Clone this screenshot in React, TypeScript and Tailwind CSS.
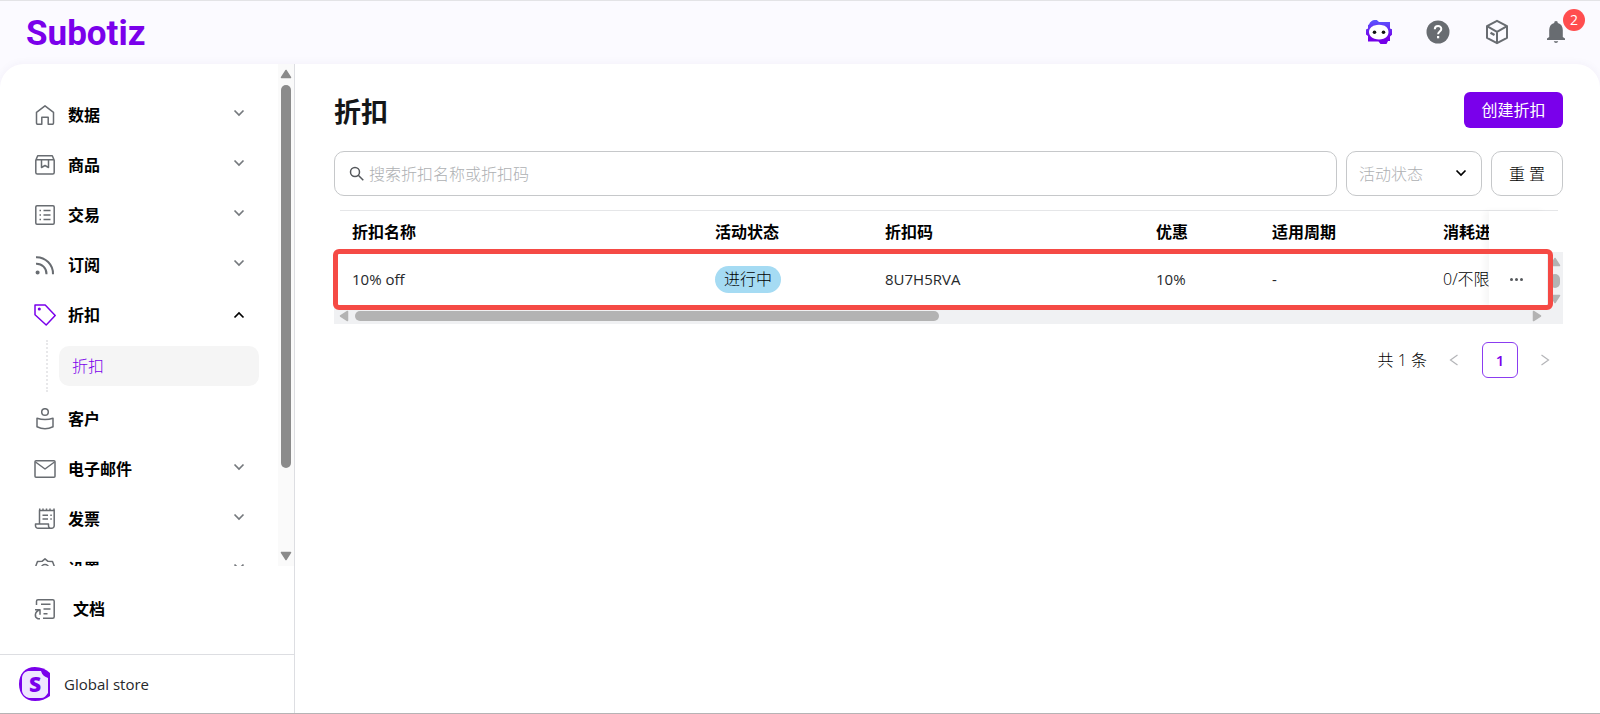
import React from "react";

type IconName =
  | "home" | "box" | "list" | "rss" | "tag" | "user" | "mail" | "invoice" | "gear" | "doc";

const shapes: Record<IconName, React.ReactNode> = {
  home: (
    <path d="M2.500 8.300 11 1.800l8.500 6.500V19a1.200 1.200 0 0 1-1.200 1.200h-4.100v-7H7.800v7H3.700A1.200 1.200 0 0 1 2.500 19Z" />
  ),
  box: (
    <>
      <path d="M1.800 6.200v12.300A1.500 1.500 0 0 0 3.300 20h15.400a1.500 1.500 0 0 0 1.500-1.500V6.200L18.300 1.800H3.700ZM1.800 5.700h18.400" />
      <path d="M7.500 6v7.500l3.500-2 3.500 2V6" />
    </>
  ),
  list: (
    <>
      <rect x="1.800" y="1.800" width="18.400" height="18.400" rx="1.200" />
      <path d="M9.500 6.500h7M9.500 11h7M9.500 15.500h7M5.500 6.500H7M5.500 11H7M5.500 15.500H7" />
    </>
  ),
  rss: (
    <>
      <path d="M2 3.200A16.500 16.500 0 0 1 19 20.200M2 9.700A10 10 0 0 1 12.500 20.200" strokeWidth="2" />
      <circle cx="3.600" cy="18.500" r="1.300" fill="currentColor" />
    </>
  ),
  tag: (
    <>
      <path d="M1 1h10.200l10 10.500-9 9.500L1 10.800Z" />
      <circle cx="5.300" cy="5" r=".8" fill="currentColor" />
    </>
  ),
  user: (
    <>
      <circle cx="11" cy="4" r="3.300" />
      <path d="M3 10.200c5 1.500 11 1.500 16 0v8.600c-5 2.400-11 2.400-16 0Z" />
    </>
  ),
  mail: (
    <>
      <rect x="1" y="2.800" width="20" height="16.400" rx="1" />
      <path d="m1.500 4 9.500 7 9.500-7" />
    </>
  ),
  invoice: (
    <>
      <path d="M5.500 15.500V2.500h14.700v15.200a2.500 2.500 0 0 1-2.500 2.500H4a2.500 2.500 0 0 1-2.500-2.500v-1.700h13v1.700a2.500 2.500 0 0 0 2.500 2.500" />
      <path d="M5.700.5v2M9 .5v2M12.500.5v2M16 .5v2M20 .5v2M8.500 7.200H14M8.500 11H14M16.300 7.200h1.500M16.300 11h1.500" />
    </>
  ),
  gear: (
    <>
      <path d="m11 .8 3 2.500 4.500.300 1.500 3.900L21 11.300l-1.900 3.700-2.500 3.500-5.600 2-5.600-2L2.900 15 1 11.300l1-3.800 1.500-3.900L8 3.300Z" />
      <circle cx="11" cy="10.500" r="4" />
    </>
  ),
  doc: (
    <>
      <path d="M2.500 7V3.300a1.500 1.500 0 0 1 1.500-1.500h14.700a1.500 1.500 0 0 1 1.500 1.500v15.400a1.500 1.500 0 0 1-1.500 1.500H9" />
      <path d="M7 6.300h9.500M9.500 11h7M9.500 15.700h4M1 11.700h5v5M5.800 12C.5 13.500 0 19 4 20.700h2" />
    </>
  ),
};

function NavIcon({ name, active }: { name: IconName; active?: boolean }) {
  return (
    <svg
      viewBox="0 0 22 22"
      className={active ? "size-[22px] shrink-0 text-[#7a00eb]" : "size-[22px] shrink-0 text-[#686c71]"}
      fill="none"
      stroke="currentColor"
      strokeWidth="1.500"
      strokeLinejoin="round"
      aria-hidden="true"
    >
      {shapes[name]}
    </svg>
  );
}

function Chevron({ up, dark }: { up?: boolean; dark?: boolean }) {
  return (
    <svg
      viewBox="0 0 12 12"
      className={dark || up ? "size-3 shrink-0 text-black" : "size-3 shrink-0 text-[#75797d]"}
      fill="none"
      stroke="currentColor"
      strokeWidth="1.700"
      aria-hidden="true"
    >
      <path d={up ? "m1.500 8.500 4.500-4.500 4.500 4.500" : "m1.500 3.500 4.500 4.500 4.500-4.500"} />
    </svg>
  );
}

function Arrow({ dir, className }: { dir: "up" | "down" | "left" | "right"; className: string }) {
  const d = {
    up: "M6 2.500 10.500 9.500h-9Z",
    down: "M6 9.500 1.500 2.500h9Z",
    left: "M2.500 6 9.500 1.500v9Z",
    right: "M9.500 6 2.500 10.500v-9Z",
  }[dir];
  return (
    <svg viewBox="0 0 12 12" className={className} fill="currentColor" stroke="currentColor" strokeLinejoin="round" strokeWidth="1.500" aria-hidden="true">
      <path d={d} />
    </svg>
  );
}

const nav: { icon: IconName; label: string; leaf?: boolean; open?: boolean }[] = [
  { icon: "home", label: "数据" },
  { icon: "box", label: "商品" },
  { icon: "list", label: "交易" },
  { icon: "rss", label: "订阅" },
  { icon: "tag", label: "折扣", open: true },
  { icon: "user", label: "客户", leaf: true },
  { icon: "mail", label: "电子邮件" },
  { icon: "invoice", label: "发票" },
  { icon: "gear", label: "设置" },
];

function TopBar() {
  return (
    <header className="flex h-16 shrink-0 items-center justify-between border-t border-[#e3e3e6] pr-[30px] pb-px pl-[26px]">
      <a href="#home" className="pt-[3px] font-[Roboto] text-[35px] leading-10 font-bold text-[#7a00eb]">
        Subotiz
      </a>
      <div className="flex items-center gap-[31px] text-[#686c71]">
        <button type="button" aria-label="助手" className="size-7">
          <svg viewBox="0 0 28 28" className="size-7">
            <defs>
              <linearGradient id="bot" x1="0" y1="0" x2="0" y2="1">
                <stop offset="0" stopColor="#5a57ff" />
                <stop offset="0.75" stopColor="#7400e8" />
              </linearGradient>
            </defs>
            <path
              fill="url(#bot)"
              d="M4 6.500C5 3.500 7.500 2 9.500 2h2.300L14 4h11v6.500l2 .8v5.500l-2 1.700V23h-2l-1.500 3h-6l-2-2.500H3V18l-2-1.500v-5l2-1V7Z"
            />
            <path d="M9.500 7.500c3-1 6-1 9 0 3 .7 5 3.500 5 6.500s-2 6-5 6.700c-3 .9-6 .9-9 0-3-.7-5.500-3.700-5.500-6.700s2.500-5.800 5.500-6.500Z" fill="#fff" />
            <circle cx="9.500" cy="14.300" r="1.800" fill="#111" />
            <circle cx="18.500" cy="14.300" r="1.800" fill="#111" />
          </svg>
        </button>
        <button type="button" aria-label="帮助" className="size-7">
          <svg viewBox="0 0 28 28" className="size-7">
            <circle cx="14" cy="14" r="11.500" fill="currentColor" />
            <path d="M10.800 11.200c0-4.200 6.500-4.200 6.500-.3 0 2.600-3.200 2.600-3.200 5.400" fill="none" stroke="#fff" strokeWidth="2" />
            <rect x="13" y="18" width="2.200" height="2.300" fill="#fff" />
          </svg>
        </button>
        <button type="button" aria-label="应用" className="size-7">
          <svg viewBox="0 0 28 28" className="size-7" fill="none" stroke="currentColor" strokeWidth="2" strokeLinejoin="round">
            <path d="M14 2.800 24 8.200v11.600l-10 5.400-10-5.400V8.200ZM4 8.200l10 5.600 10-5.600M14 13.800v11.400" />
            <path d="m7.500 14.800 4 2.200" strokeWidth="2.400" />
          </svg>
        </button>
        <button type="button" aria-label="通知" className="relative size-7">
          <svg viewBox="0 0 28 28" className="size-7" fill="currentColor">
            <path d="M14 3a1.800 1.800 0 0 1 1.800 2c3.400.9 5 3.700 5 7v7l2.200 1.500V22H5v-1.500L7.200 19v-7c0-3.300 1.600-6.100 5-7A1.800 1.800 0 0 1 14 3ZM11.800 23.300h4.400c-.6 2.300-3.800 2.300-4.400 0Z" />
          </svg>
          <span className="absolute -top-[9px] left-[21px] flex size-[22px] items-center justify-center rounded-full bg-[#ff4d4f] text-sm leading-none text-white">
            2
          </span>
        </button>
      </div>
    </header>
  );
}

function Sidebar() {
  return (
    <aside className="flex w-[295px] shrink-0 flex-col border-r border-[#dddee2]">
      <div className="flex h-[502px] overflow-hidden">
        <nav className="flex-1 pt-[26px]">
          {nav.map((item) => (
            <div key={item.label}>
              <a href={"#" + item.icon} className="flex h-[50px] items-center pr-[33px] pl-[34px] text-base font-bold text-black">
                <NavIcon name={item.icon} active={item.open} />
                <span className="ml-3 flex-1">{item.label}</span>
                {!item.leaf && (
                  <span className={item.open ? "pb-px" : "pb-1"}>
                    <Chevron up={item.open} />
                  </span>
                )}
              </a>
              {item.open && (
                <div className="mb-[2px] ml-[46px] flex h-[52px] items-center border-l-2 border-dotted border-[#e8e8ea] pl-[11px]">
                  <a href="#discounts" className="flex h-10 w-[200px] items-center rounded-[10px] bg-[#f5f5f5] pl-[13px] text-base font-light text-[#7a00eb]">
                    折扣
                  </a>
                </div>
              )}
            </div>
          ))}
        </nav>
        <div className="flex w-4 flex-col items-center bg-[#fafafa] py-1 text-[#8b8b8b]" aria-hidden="true">
          <Arrow dir="up" className="size-3" />
          <span className="mt-[5px] h-[383px] w-[10px] rounded-full bg-[#8b8b8b]" />
          <Arrow dir="down" className="mt-auto size-3" />
        </div>
      </div>
      <a href="#docs" className="mt-[18px] flex h-[50px] items-center gap-[17px] pl-[34px] text-base font-bold text-black">
        <NavIcon name="doc" />
        文档
      </a>
      <a href="#store" className="mt-auto flex h-[59px] items-center gap-[13px] border-t border-[#dddee2] pl-[19px] text-[15px] text-[#26282b]">
        <svg viewBox="0 0 32 34" className="h-[34px] w-8" aria-hidden="true">
          <path d="M16 0c6 0 11 2 15 6v23c-4 3-9 5-15 5C6 34 0 27 0 17S6 0 16 0Z" fill="#7a00eb" />
          <path d="M9 4h13c1 4 4 6 7 7v15c-2 3-4 5-7 5H10c-4-1-7-4-7-8V11c0-3 2-6 6-7Z" fill="#eee6ff" />
          <text x="16" y="25" textAnchor="middle" fontFamily="Open Sans, sans-serif" fontWeight="800" fontSize="21" fill="#7a00eb">
            S
          </text>
        </svg>
        Global store
      </a>
    </aside>
  );
}

const headers = ["折扣名称", "活动状态", "折扣码", "优惠", "适用周期", "消耗进"];

function DiscountTable() {
  return (
    <div className="relative mt-[14px]">
      <div className="mr-[5px] ml-[6px] border-t border-[#e5e6e8]" />
      <div className="flex">
        <div className="min-w-0 flex-1 pl-[6px]">
          <table className="w-full table-fixed border-collapse text-left whitespace-nowrap">
            <colgroup>
              <col />
              <col className="w-[170px]" />
              <col className="w-[271px]" />
              <col className="w-[116px]" />
              <col className="w-[171px]" />
              <col className="w-[58px]" />
              <col className="w-[58px]" />
            </colgroup>
            <thead>
              <tr className="h-[41px] text-base text-black">
                {headers.map((h) => (
                  <th key={h} className="overflow-hidden pl-3 font-bold">
                    {h}
                  </th>
                ))}
                <th aria-label="操作" className="shadow-[-4px_0_6px_rgba(0,0,0,0.04)]" />
              </tr>
            </thead>
            <tbody>
              <tr className="h-[54px] text-[15px] text-[#26282b]">
                <td className="pl-3">10% off</td>
                <td className="pl-3">
                  <span className="inline-flex h-[27px] items-center rounded-full bg-[#a5dbf3] px-[9px] text-base font-light text-black">进行中</span>
                </td>
                <td className="pl-3">8U7H5RVA</td>
                <td className="pl-3">10%</td>
                <td className="pl-3">-</td>
                <td className="overflow-hidden pl-3 text-base font-light text-black">0/不限</td>
                <td className="shadow-[-4px_0_6px_rgba(0,0,0,0.04)]">
                  <button type="button" aria-label="更多" className="ml-[19px] flex h-6 w-4 items-center justify-center gap-[2px]">
                    <span className="size-[3px] rounded-full bg-[#55585c]" />
                    <span className="size-[3px] rounded-full bg-[#55585c]" />
                    <span className="size-[3px] rounded-full bg-[#55585c]" />
                  </button>
                </td>
              </tr>
            </tbody>
          </table>
        </div>
        <div className="mt-[41px] flex w-4 flex-col items-center justify-between bg-[#f0f1f3] pt-1 pb-px text-[#b3b3b3]" aria-hidden="true">
          <Arrow dir="up" className="size-3" />
          <span className="h-[14px] w-[10px] rounded-full bg-[#b3b3b3]" />
          <Arrow dir="down" className="size-3" />
        </div>
      </div>
      <div className="flex h-[18px] items-center bg-[#f0f1f3] pt-[2px] pr-5 pl-1 text-[#b3b3b3]" aria-hidden="true">
        <Arrow dir="left" className="size-3" />
        <span className="ml-[5px] h-[10px] w-[584px] rounded-full bg-[#b3b3b3]" />
        <Arrow dir="right" className="ml-auto size-3" />
      </div>
      <div className="pointer-events-none absolute top-[39px] right-[10px] -left-px h-[61px] rounded-md border-[5px] border-[#f54a45]" />
    </div>
  );
}

function Pagination() {
  return (
    <div className="mt-[18px] flex h-9 items-center justify-end pr-3 text-base text-black">
      <span className="font-light">共 1 条</span>
      <button type="button" aria-label="上一页" className="ml-[21px] text-[#b4b5b8]">
        <svg viewBox="0 0 12 12" className="size-3" fill="none" stroke="currentColor" strokeWidth="1.200">
          <path d="M9.500 1 2.500 6l7 5" />
        </svg>
      </button>
      <button type="button" className="ml-[22px] flex size-9 items-center justify-center rounded-md border border-[#8b3df0] text-[15px] font-semibold text-[#7a00eb]">
        1
      </button>
      <button type="button" aria-label="下一页" className="ml-[21px] text-[#b4b5b8]">
        <svg viewBox="0 0 12 12" className="size-3" fill="none" stroke="currentColor" strokeWidth="1.200">
          <path d="m2.500 1 7 5-7 5" />
        </svg>
      </button>
    </div>
  );
}

export default function App() {
  return (
    <div className="flex min-h-screen flex-col border-b border-[#b9b7b7] bg-[#fbfaff] font-['Open_Sans','Noto_Sans_CJK_SC',sans-serif] text-[#141618]">
      <TopBar />
      <div className="flex flex-1 rounded-t-[24px] bg-white shadow-[0_0_10px_rgba(60,40,120,0.05)]">
        <Sidebar />
        <main className="min-w-0 flex-1 pt-7 pr-[37px] pl-[39px]">
          <div className="flex items-start justify-between">
            <h1 className="text-[27px] leading-10 font-bold">折扣</h1>
            <button type="button" className="h-9 w-[99px] rounded-md bg-[#7a00eb] text-base text-white">
              创建折扣
            </button>
          </div>
          <div className="mt-[19px] flex h-[45px] items-stretch gap-[9px]">
            <label className="flex min-w-0 flex-1 items-center rounded-[10px] border border-[#c6c8ca] pl-[14px]">
              <svg viewBox="0 0 16 16" className="size-4 shrink-0 text-[#55585c]" fill="none" stroke="currentColor" strokeWidth="1.500" aria-hidden="true">
                <circle cx="6" cy="6" r="4.500" />
                <path d="m9.300 9.300 5 5" />
              </svg>
              <input
                type="text"
                aria-label="搜索折扣"
                placeholder="搜索折扣名称或折扣码"
                className="ml-1 min-w-0 flex-1 bg-transparent text-base font-light outline-none placeholder:text-[#aeb0b3]"
              />
            </label>
            <div className="relative flex w-[136px]">
              <select aria-label="活动状态" className="w-full appearance-none rounded-[10px] border border-[#c6c8ca] bg-white pl-3 text-base font-light text-[#aeb0b3]">
                <option>活动状态</option>
              </select>
              <span className="pointer-events-none absolute top-4 right-[15px]">
                <Chevron dark />
              </span>
            </div>
            <button type="button" className="w-[72px] rounded-[10px] border border-[#c6c8ca] bg-white text-base font-light text-black">
              重 置
            </button>
          </div>
          <DiscountTable />
          <Pagination />
        </main>
      </div>
    </div>
  );
}
